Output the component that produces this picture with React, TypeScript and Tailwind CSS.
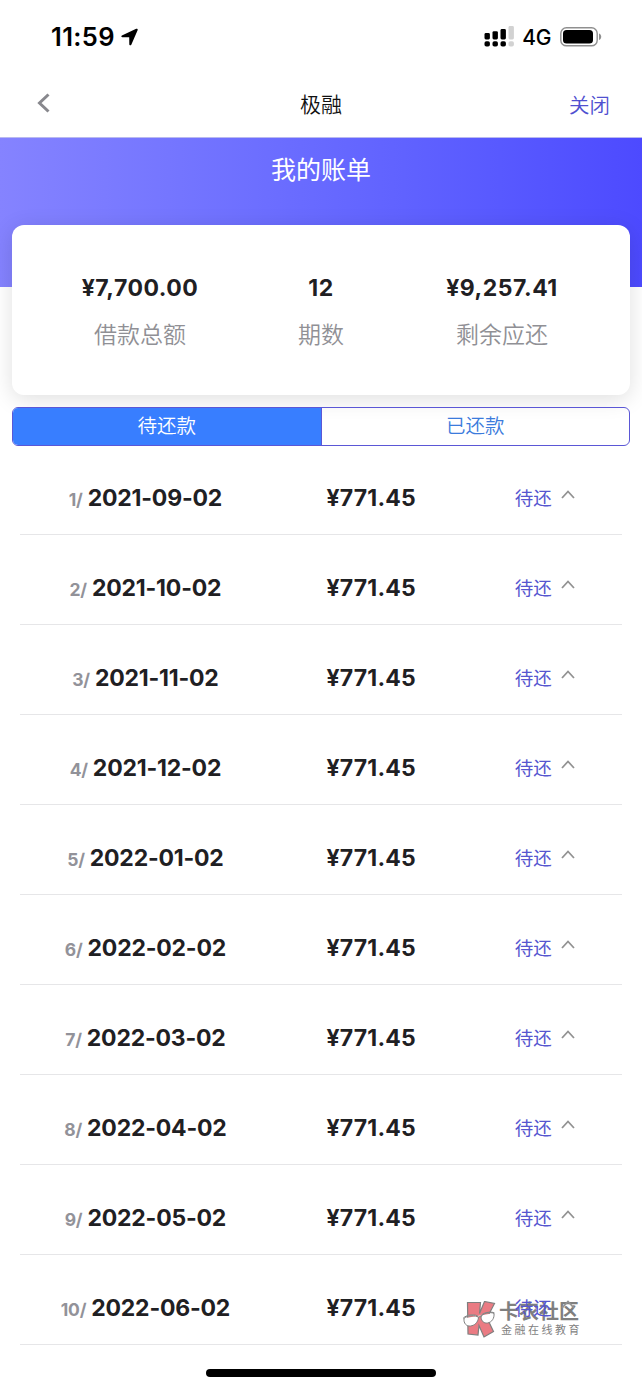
type Bill = {
  index: number;
  date: string;
  amount: string;
};

const dates = [
  "2021-09-02",
  "2021-10-02",
  "2021-11-02",
  "2021-12-02",
  "2022-01-02",
  "2022-02-02",
  "2022-03-02",
  "2022-04-02",
  "2022-05-02",
  "2022-06-02",
];

const bills: Bill[] = dates.map((date, i) => ({ index: i + 1, date, amount: "¥771.45" }));

const summary = [
  { value: "¥7,700.00", label: "借款总额" },
  { value: "12", label: "期数" },
  { value: "¥9,257.41", label: "剩余应还" },
];

function StatusBar() {
  return (
    <div className="flex h-[73px] items-center justify-between pl-[51px] pr-[40px]">
      <div className="flex items-center gap-[6px]">
        <span className="text-[25.5px] leading-none font-semibold tracking-[0.35px] text-black">11:59</span>
        <svg width="17" height="18" viewBox="0 0 17 18" fill="black">
          <path d="M15.2.8.9 7.400c-1 .5-.8 1.800.4 1.800l6.900.1.1 7c0 1.200 1.500 1.400 2 .4L16.600 2.200c.4-1-.4-1.800-1.400-1.400z" />
        </svg>
      </div>
      <div className="flex items-center">
        <svg width="30" height="22" viewBox="0 0 30 22" fill="black" className="mt-[1px]">
          <rect x="0.5" y="7" width="5.4" height="6.4" rx="1.4" />
          <rect x="8.500" y="5.2" width="5.4" height="8.2" rx="1.4" />
          <rect x="16.500" y="3" width="5.4" height="10.4" rx="1.4" />
          <rect x="24.500" y="0" width="5.4" height="13.4" rx="1.4" fill="#d2d2d2" />
          <rect x="0.5" y="15.2" width="5.4" height="5.4" rx="1.8" />
          <rect x="8.500" y="15.2" width="5.4" height="5.4" rx="1.8" />
          <rect x="16.500" y="15.2" width="5.4" height="5.4" rx="1.8" />
          <rect x="24.500" y="15.2" width="5.4" height="5.4" rx="1.8" fill="#d2d2d2" />
        </svg>
        <span className="mt-[2px] ml-[8px] text-[21px] leading-none font-medium tracking-[-0.4px] text-black">4G</span>
        <svg className="ml-[9px]" width="42" height="20" viewBox="0 0 42 20">
          <rect x="0.8" y="0.8" width="36.4" height="18" rx="5.6" fill="none" stroke="#8f8f8f" strokeWidth="1.4" />
          <rect x="3" y="3" width="30" height="13.6" rx="3.6" fill="black" />
          <path d="M39 6.6c1.5.6 2.2 1.800 2.200 3.200s-.7 2.600-2.200 3.200z" fill="#8f8f8f" />
        </svg>
      </div>
    </div>
  );
}

function NavBar() {
  return (
    <div className="grid h-[65px] grid-cols-[1fr_auto_1fr] items-center border-b border-[#b9b9f0] px-8">
      <div className="pl-[5px]">
        <svg width="13" height="20" viewBox="0 0 13 20" fill="none" stroke="#88888d" strokeWidth="3" className="mb-[4px]">
          <path d="M11.500 1.500 2.500 10l9 8.500" />
        </svg>
      </div>
      <h1 className="pb-[2px] text-[21px] leading-none font-[350] text-[#111]">极融</h1>
      <div className="pt-[3px] text-right text-[20.5px] leading-none font-[350] text-[#5050d0]">关闭</div>
    </div>
  );
}

function SummaryCard() {
  return (
    <div className="mx-3 -mt-[62px] grid h-[170px] grid-cols-[1fr_106px_1fr] rounded-xl bg-white pt-[50px] text-center shadow-[0_4px_22px_rgba(0,0,0,0.13)]">
      {summary.map((item) => (
        <div key={item.label}>
          <div className="text-[23px] leading-[26px] font-[650] tracking-[0.5px] text-[#1f2023]">{item.value}</div>
          <div className="mt-[20px] text-[23px] leading-[28px] font-[350] text-[#909095]">{item.label}</div>
        </div>
      ))}
    </div>
  );
}

function Tabs() {
  return (
    <div className="mx-3 mt-[12px] flex h-[39px] overflow-hidden rounded-[6px] border-[1.5px] border-[#5b57d6] text-center text-[19.500px] leading-[37px]">
      <div className="flex-1 bg-[#387eff] font-[350] text-white">待还款</div>
      <div className="flex-1 border-l border-[#5b57d6] font-[350] text-[#3b7bdc]">已还款</div>
    </div>
  );
}

function Watermark() {
  return (
    <div className="absolute top-[46px] left-[442px] flex items-start opacity-75">
      <svg width="34" height="38" viewBox="0 0 34 38">
        <path
          d="M5.500 1.500h13l-1 11 5-12 10 2-7.500 14.500 6.500 13.500-9.500 5.500-5-11.500-1 9.500-10-1z"
          fill="#e3505a"
          stroke="#555"
          strokeWidth="1.200"
        />
        <path
          d="M1 17.500c3-4 13-5 15.500-1.500l2-.500c1.500-4 11-5.500 14-3.500M2 17.500c-.5 5 2.500 8 6.500 7.500s7.500-3.500 8-8.500c-3-3-12-2-14.500 1zM19 16c.500 4.500 3 6.500 6.500 6 4.500-.7 7-5 6.500-9.500-3-2-12-.5-13 3.500z"
          fill="white"
          stroke="#555"
          strokeWidth="1"
        />
      </svg>
      <div className="ml-[3px] text-[#555]">
        <div className="text-[20px] leading-[23px] font-bold">卡农社区</div>
        <div className="ml-[2px] text-[11px] leading-[12px] tracking-[2.500px]">金融在线教育</div>
      </div>
    </div>
  );
}

function BillRow({ bill }: { bill: Bill }) {
  return (
    <div className="relative grid h-[90px] grid-cols-[5fr_4fr_3fr] items-center border-b-[1.5px] border-[#e6e6e8] pt-[16px] text-center leading-[30px]">
      <div className="mt-[2px] flex items-baseline justify-center gap-[5px] text-[23px] font-[650] tracking-[-0.2px] text-[#1f2023]">
        <span className="text-[17.500px] text-[#929299]">{bill.index}/</span>
        <span>{bill.date}</span>
      </div>
      <div className="text-[23px] font-[650] tracking-[0.2px] text-[#1f2023]">{bill.amount}</div>
      <div className="flex items-center justify-center gap-[9px] pr-[4px] text-[18.500px] text-[#5656cf]">
        待还
        <svg width="14" height="9" viewBox="0 0 14 9" fill="none" stroke="#929292" strokeWidth="1.800" className="mb-[6px]">
          <path d="M1 8l6-6.500L13 8" />
        </svg>
      </div>
    </div>
  );
}

export default function App() {
  return (
    <div className="flex h-[1389px] w-[642px] flex-col overflow-hidden bg-white font-[Inter,'Noto_Sans_CJK_SC',sans-serif]">
      <StatusBar />
      <NavBar />
      <div className="h-[149px] shrink-0 bg-linear-to-r from-[#8583ff] to-[#4d4aff] pt-[14px] text-center text-[25px] leading-[36px] text-white">
        我的账单
      </div>
      <SummaryCard />
      <Tabs />
      <div className="mx-5 -mt-px">
        {bills.slice(0, -1).map((bill) => (
          <BillRow key={bill.index} bill={bill} />
        ))}
        <div className="relative">
          <Watermark />
          <BillRow bill={bills[bills.length - 1]} />
        </div>
      </div>
      <div className="mx-auto mt-[24px] h-[8px] w-[230px] shrink-0 rounded-full bg-black" />
    </div>
  );
}
